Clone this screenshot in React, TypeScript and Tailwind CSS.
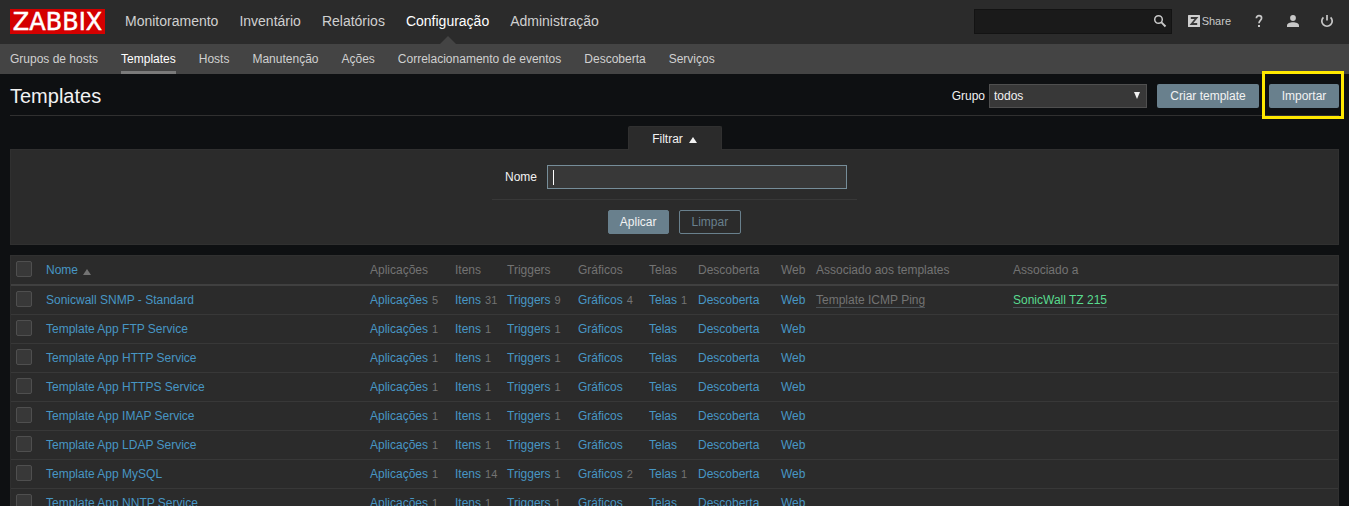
import React from "react";

const mainMenu = ["Monitoramento", "Inventário", "Relatórios", "Configuração", "Administração"];
const subMenu = [
  "Grupos de hosts",
  "Templates",
  "Hosts",
  "Manutenção",
  "Ações",
  "Correlacionamento de eventos",
  "Descoberta",
  "Serviços",
];

type Row = {
  name: string;
  apps: number;
  items: number;
  triggers: number;
  graphs?: number;
  screens?: number;
  linkedTemplate?: string;
  linkedTo?: string;
};

const rows: Row[] = [
  {
    name: "Sonicwall SNMP - Standard",
    apps: 5,
    items: 31,
    triggers: 9,
    graphs: 4,
    screens: 1,
    linkedTemplate: "Template ICMP Ping",
    linkedTo: "SonicWall TZ 215",
  },
  { name: "Template App FTP Service", apps: 1, items: 1, triggers: 1 },
  { name: "Template App HTTP Service", apps: 1, items: 1, triggers: 1 },
  { name: "Template App HTTPS Service", apps: 1, items: 1, triggers: 1 },
  { name: "Template App IMAP Service", apps: 1, items: 1, triggers: 1 },
  { name: "Template App LDAP Service", apps: 1, items: 1, triggers: 1 },
  { name: "Template App MySQL", apps: 1, items: 14, triggers: 1, graphs: 2, screens: 1 },
  { name: "Template App NNTP Service", apps: 1, items: 1, triggers: 1 },
];

const headers = [
  "Aplicações",
  "Itens",
  "Triggers",
  "Gráficos",
  "Telas",
  "Descoberta",
  "Web",
  "Associado aos templates",
  "Associado a",
];

function Check({ label }: { label: string }) {
  return (
    <input
      type="checkbox"
      aria-label={label}
      className="block size-4 appearance-none rounded-xs border border-[#4f4f4f] bg-[#383838] checked:bg-[#69808d]"
    />
  );
}

function CountLink({ label, count }: { label: string; count?: number }) {
  return (
    <td className="px-[5px]">
      <a href="#" className="text-[#4796c4]">
        {label}
      </a>
      {count !== undefined && <span className="ml-1 text-[11px] text-[#737373]">{count}</span>}
    </td>
  );
}

function Header() {
  return (
    <header>
      <div className="flex h-11 items-center justify-between bg-[#2b2b2b] pr-[15px] pl-[10px]">
        <div className="flex h-full items-center gap-5">
          <a href="#" className="mb-px block">
            <svg width="95" height="25" viewBox="0 0 95 25">
              <rect width="95" height="25" fill="#d40000" />
              <text
                x="47.5"
                y="21"
                textAnchor="middle"
                fontFamily="DejaVu Sans, sans-serif"
                fontSize="24"
                fill="#fff"
                stroke="#fff"
                strokeWidth="0.5"
              >
                ZABBIX
              </text>
            </svg>
          </a>
          <nav className="flex h-full gap-[21px] text-sm text-[#d0d0d0]">
            {mainMenu.map((item) => (
              <a
                key={item}
                href="#"
                className={
                  item === "Configuração"
                    ? "relative flex h-full items-center pb-[2px] text-white"
                    : "flex h-full items-center pb-[2px]"
                }
              >
                {item}
                {item === "Configuração" && (
                  <svg className="absolute bottom-0 left-1/2 -translate-x-1/2" width="16" height="8" viewBox="0 0 16 8">
                    <path d="M0 8 8 0l8 8z" fill="#444444" />
                  </svg>
                )}
              </a>
            ))}
          </nav>
        </div>
        <div className="flex items-center pb-[2px] text-[#c8c8c8]">
          <div className="relative">
            <input
              type="text"
              aria-label="Pesquisar"
              className="block h-[25px] w-[198px] border border-[#131313] bg-[#1a1a1a] pr-7 pl-1 text-white outline-none"
            />
            <button type="button" aria-label="Pesquisar" className="absolute top-1 right-1 flex size-4 items-center justify-center">
              <svg width="14" height="14" viewBox="0 0 14 14" fill="none" stroke="currentColor">
                <circle cx="5.5" cy="5.5" r="3.8" strokeWidth="1.5" />
                <path d="m8.2 8.2 4.3 4.3" strokeWidth="1.9" />
              </svg>
            </button>
          </div>
          <a href="#" className="ml-4 flex items-center gap-[2px] text-[11px]">
            <svg width="12" height="12" viewBox="0 0 12 12">
              <rect width="12" height="12" rx="0.5" fill="#cfcfcf" />
              <path d="M2.8 3h5.7L3.5 9h5.7" fill="none" stroke="#3a3a3a" strokeWidth="1.8" />
            </svg>
            Share
          </a>
          <a href="#" aria-label="Ajuda" className="ml-[21px]">
            <svg width="14" height="14" viewBox="0 0 14 14" fill="none" stroke="currentColor" strokeWidth="1.7">
              <path d="M4.4 4.2C4.4 2.4 5.4 1.7 7 1.7s2.6.9 2.6 2.4C9.6 6.4 7 6.4 7 9.3" />
              <path d="M6 12h2" strokeWidth="2" />
            </svg>
          </a>
          <a href="#" aria-label="Perfil" className="ml-5">
            <svg width="14" height="14" viewBox="0 0 14 14" fill="currentColor">
              <circle cx="7" cy="4" r="2.9" />
              <path d="M1 13v-1.6C1 9.2 4.2 8.2 7 8.2s6 1 6 3.2V13z" />
            </svg>
          </a>
          <a href="#" aria-label="Sair" className="ml-5">
            <svg width="14" height="14" viewBox="0 0 14 14" fill="none" stroke="currentColor" strokeWidth="1.7">
              <path d="M3.4 3.3a5.2 5.2 0 1 0 7.2 0M7 1v5.6" />
            </svg>
          </a>
        </div>
      </div>
      <nav className="flex h-[30px] gap-[23px] bg-[#444444] px-[10px] text-[#d0d0d0]">
        {subMenu.map((item) => (
          <a
            key={item}
            href="#"
            className={
              item === "Templates"
                ? "flex items-center border-b-3 border-[#7a7a7a] pt-[3px] text-white"
                : "flex items-center border-b-3 border-transparent pt-[3px]"
            }
          >
            {item}
          </a>
        ))}
      </nav>
    </header>
  );
}

function Filter() {
  return (
    <section className="mt-[10px]">
      <div className="flex justify-center">
        <button
          type="button"
          className="relative -mb-px flex h-6 w-[94px] items-center justify-center gap-[6px] rounded-t-xs border border-b-0 border-[#303030] bg-[#2b2b2b]"
        >
          Filtrar
          <svg className="mt-[3px]" width="8" height="6" viewBox="0 0 8 6" fill="currentColor">
            <path d="M0 6 4 0l4 6z" />
          </svg>
        </button>
      </div>
      <form
        className="flex flex-col items-center border border-[#303030] bg-[#2b2b2b] pt-[15px] pb-[10px]"
        onSubmit={(e) => e.preventDefault()}
      >
        <div className="flex w-[365px] items-center justify-end gap-[10px] border-b border-[#383838] pr-[10px] pb-[10px]">
          <label htmlFor="filter-name">Nome</label>
          <div className="relative">
            <input
              id="filter-name"
              type="text"
              className="block h-6 w-[300px] border border-[#768d99] bg-[#383838] px-[5px] caret-transparent outline-none"
            />
            <span className="absolute top-[5px] left-[6px] h-[15px] w-px bg-white" />
          </div>
        </div>
        <div className="mt-[10px] flex gap-[10px]">
          <button type="submit" className="h-6 rounded-xs border border-[#69808d] bg-[#69808d] px-[11px]">
            Aplicar
          </button>
          <button type="button" className="h-6 rounded-xs border border-[#69808d] px-3 text-[#69808d]">
            Limpar
          </button>
        </div>
      </form>
    </section>
  );
}

function TemplateTable() {
  return (
    <table className="mt-[10px] w-full table-fixed border-separate border-spacing-0 border border-[#303030] bg-[#2b2b2b] text-left whitespace-nowrap">
      <colgroup>
        <col className="w-[30px]" />
        <col className="w-[324px]" />
        <col className="w-[85px]" />
        <col className="w-[52px]" />
        <col className="w-[71px]" />
        <col className="w-[71px]" />
        <col className="w-[49px]" />
        <col className="w-[83px]" />
        <col className="w-[35px]" />
        <col className="w-[197px]" />
        <col />
      </colgroup>
      <thead>
        <tr className="h-[30px] text-[#737373] *:border-b-2 *:border-[#404040] *:font-normal">
          <th className="px-[5px] pb-[2px]">
            <Check label="Selecionar todos" />
          </th>
          <th className="px-[5px]">
            <a href="#" className="inline-flex items-center gap-[5px] text-[#4796c4]">
              Nome
              <svg className="mt-[3px]" width="8" height="6" viewBox="0 0 8 6" fill="#737373">
                <path d="M0 6 4 0l4 6z" />
              </svg>
            </a>
          </th>
          {headers.map((h) => (
            <th key={h} className="px-[5px]">
              {h}
            </th>
          ))}
        </tr>
      </thead>
      <tbody>
        {rows.map((r) => (
          <tr key={r.name} className="h-[29px] *:border-b *:border-[#383838]">
            <td className="px-[5px] pb-[2px]">
              <Check label={r.name} />
            </td>
            <td className="px-[5px]">
              <a href="#" className="text-[#4796c4]">
                {r.name}
              </a>
            </td>
            <CountLink label="Aplicações" count={r.apps} />
            <CountLink label="Itens" count={r.items} />
            <CountLink label="Triggers" count={r.triggers} />
            <CountLink label="Gráficos" count={r.graphs} />
            <CountLink label="Telas" count={r.screens} />
            <CountLink label="Descoberta" />
            <CountLink label="Web" />
            <td className="px-[5px]">
              {r.linkedTemplate && (
                <a href="#" className="border-b border-[#4b5257] text-[#737373]">
                  {r.linkedTemplate}
                </a>
              )}
            </td>
            <td className="px-[5px]">
              {r.linkedTo && (
                <a href="#" className="border-b border-[#4b5257] text-[#59db8f]">
                  {r.linkedTo}
                </a>
              )}
            </td>
          </tr>
        ))}
      </tbody>
    </table>
  );
}

export default function App() {
  return (
    <div className="h-screen overflow-hidden bg-[#0e1012] font-['Liberation_Sans',Arial,sans-serif] text-xs text-[#f2f2f2]">
      <Header />
      <main className="px-[10px]">
        <div className="flex h-[42px] items-center justify-between border-b border-[#303030] pt-[3px]">
          <h1 className="text-xl">Templates</h1>
          <div className="flex items-center gap-[10px]">
            <div className="flex items-center gap-1">
              <label htmlFor="group">Grupo</label>
              <div className="relative">
                <select
                  id="group"
                  className="block h-6 w-[158px] appearance-none border border-[#4f4f4f] bg-[#383838] pr-5 pl-1 outline-none"
                >
                  <option>todos</option>
                </select>
                <svg
                  className="pointer-events-none absolute top-2 right-[6px]"
                  width="8"
                  height="7"
                  viewBox="0 0 8 7"
                  fill="currentColor"
                >
                  <path d="M1 0h6L4 7z" />
                </svg>
              </div>
            </div>
            <button type="button" className="h-6 min-w-[102px] rounded-xs bg-[#69808d] px-[10px]">
              Criar template
            </button>
            <div className="relative">
              <button type="button" className="block h-6 min-w-[70px] rounded-xs bg-[#69808d] px-[10px]">
                Importar
              </button>
              <span className="pointer-events-none absolute -top-[13px] -right-[5px] -bottom-[11px] -left-[7px] border-3 border-[#ffe800]" />
            </div>
          </div>
        </div>
        <Filter />
        <TemplateTable />
      </main>
    </div>
  );
}
